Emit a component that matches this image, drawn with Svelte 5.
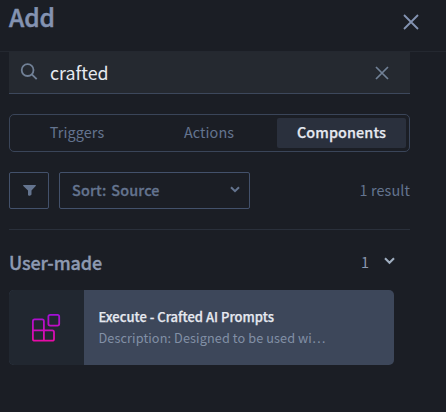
<script>
  const tabs = ['Triggers', 'Actions', 'Components'];
  let active = $state('Components');
  let query = $state('crafted');
</script>

<div class="panel">
  <header>
    <h1>Add</h1>
    <svg class="close" width="16" height="16" viewBox="0 0 16 16"><path d="M1 1 15 15M15 1 1 15" /></svg>
  </header>

  <main>
    <div class="search">
      <svg class="glass" width="18" height="18" viewBox="0 0 18 18"><circle cx="7.6" cy="7.1" r="5.9" /><path d="m11.8 11.3 4.9 4.9" /></svg>
      <span class="query">{query}</span>
      <svg class="clear" width="14" height="14" viewBox="0 0 14 14"><path d="M1 1 13 13M13 1 1 13" /></svg>
    </div>

    <div class="tabs">
      {#each tabs as tab}
        <button class={['tab', tab.toLowerCase(), { active: tab === active }]} onclick={() => (active = tab)}><span>{tab}</span></button>
      {/each}
    </div>

    <div class="filters">
      <button class="filter" aria-label="Filter">
        <svg width="13" height="11" viewBox="0 0 13 11"><path d="M.5 0h12q.7.4.2 1L8.5 5.4v3.8q0 .6-.5.9l-1 .6q-2 .2-2-.8V5.4L.3 1Q-.2.4.5 0Z" /></svg>
      </button>
      <button class="sort">
        <span>Sort: Source</span>
        <svg width="10" height="7" viewBox="0 0 10 7"><path d="m1 1.2 4 4 4-4" /></svg>
      </button>
      <span class="result">1 result</span>
    </div>

    <section>
      <div class="group">
        <h2>User-made</h2>
        <span class="count">1</span>
        <svg width="11" height="8" viewBox="0 0 11 8"><path d="m1 1.3 4.5 4.5L10 1.3" /></svg>
      </div>
      <div class="card">
        <div class="icon">
          <svg width="30" height="30" viewBox="0 0 30 30">
            <defs>
              <linearGradient id="blocks" gradientUnits="userSpaceOnUse" x1="0" y1="1" x2="0" y2="29">
                <stop offset="0" stop-color="#a010d8" />
                <stop offset="1" stop-color="#ea0ba4" />
              </linearGradient>
            </defs>
            <g fill="none" stroke="url(#blocks)" stroke-width="1.8">
              <rect x="17.4" y="1.8" width="10.8" height="10.8" rx="1.8" />
              <path d="M1.9 17.4V8.2q0-1.8 1.8-1.8h7.4q1.8 0 1.8 1.8v19.4M1.9 17.4h19.3q1.8 0 1.8 1.8v6.7q0 1.8-1.8 1.8H3.7q-1.8 0-1.8-1.8z" />
            </g>
          </svg>
        </div>
        <div class="body">
          <span class="title">Execute - Crafted AI Prompts</span>
          <span class="desc">Description: Designed to be used wi…</span>
        </div>
      </div>
    </section>
  </main>
</div>

<style>
  :global(body) { background: #1b1e25; }
  .panel {
    width: 446px; height: 412px; overflow: hidden; background: #1b1e25; color: #8493b2;
    font-family: "Noto Sans CJK SC", "Noto Sans", sans-serif; box-sizing: border-box;
  }
  * { box-sizing: border-box; }
  svg { display: block; flex: none; fill: none; stroke: currentColor; }
  button { margin: 0; padding: 0; background: none; font: inherit; color: inherit; border: 0; }
  h1, h2 { margin: 0; }
  span, h1, h2 { white-space: nowrap; }
  header { height: 52px; display: flex; justify-content: space-between; padding: 0 27px 0 9px; border-bottom: 1px solid #242830; }
  h1 { font-size: 24.5px; line-height: 34px; font-weight: 500; -webkit-text-stroke: .5px currentColor; letter-spacing: -.1px; }
  .close { margin-top: 13.5px; stroke-width: 1.8; }
  main { width: 401px; margin-left: 9px; }
  .search { height: 42px; display: flex; align-items: center; background: #252930; border-bottom: 1px solid #3d485c; padding: 0 21px 0 11px; color: #718096; }
  .glass { stroke-width: 1.8; margin-top: -1px; }
  .query { flex: 1; margin: -1px 0 0 12px; color: #e6e9f0; font-size: 17.8px; line-height: 24px; }
  .clear { stroke-width: 1.7; }
  .tabs { height: 38px; margin-top: 20px; border: 1px solid #3a4559; border-radius: 5px; padding: 3px; display: flex; color: #64748f; font-size: 14.4px; }
  .tab { width: 132px; line-height: 28px; padding: 0 4px 2px 0; border-radius: 2px; letter-spacing: .1px; }
  .components { width: 129px; padding-right: 0; }
  .active { background: #2a303d; color: #e6e9f0; font-weight: 500; -webkit-text-stroke: .25px currentColor; }
  .filters { display: flex; align-items: center; height: 37px; margin-top: 20px; color: #64748f; font-size: 14.4px; }
  .filter { width: 40px; height: 37px; border: 1px solid #43516b; border-radius: 2px; display: grid; place-items: center; }
  .filter svg { fill: currentColor; stroke: none; }
  .sort { width: 191px; height: 37px; margin-left: 10px; border: 1px solid #43516b; border-radius: 2px; padding: 0 9px 0 12px; display: flex; align-items: center; justify-content: space-between; font-weight: 500; }
  .sort span { margin-top: -2px; letter-spacing: .15px; word-spacing: 1.5px; -webkit-text-stroke: .3px currentColor; }
  .sort svg { stroke-width: 2; margin-top: -3px; }
  .result { margin: -2px 0 0 auto; letter-spacing: .1px; }
  section { border-top: 1px solid #2a303b; margin-top: 20px; width: 401px; }
  .group { height: 60px; display: flex; align-items: center; padding: 4px 15.5px 0 0; }
  h2 { font-size: 18px; font-weight: 500; color: #8d9ab2; -webkit-text-stroke: .35px currentColor; letter-spacing: -.1px; }
  .count { margin-left: auto; margin-right: 14.5px; font-size: 14.4px; margin-top: -1px; color: #8d9ab2; }
  .group svg { stroke-width: 2.1; color: #a0aec0; margin-top: -3px; }
  .card { width: 385px; height: 75px; border-radius: 5px; overflow: hidden; display: flex; background: #3d475a; }
  .icon { width: 75px; padding-right: 1px; background: #212730; display: grid; place-items: center; }
  .body { padding: 16px 0 0 14.5px; display: flex; flex-direction: column; }
  .title { color: #e6e9f0; font-weight: 500; font-size: 13px; line-height: 21px; -webkit-text-stroke: .25px currentColor; }
  .desc { color: #8290a6; font-size: 12.7px; line-height: 21px; letter-spacing: .1px; }
</style>
